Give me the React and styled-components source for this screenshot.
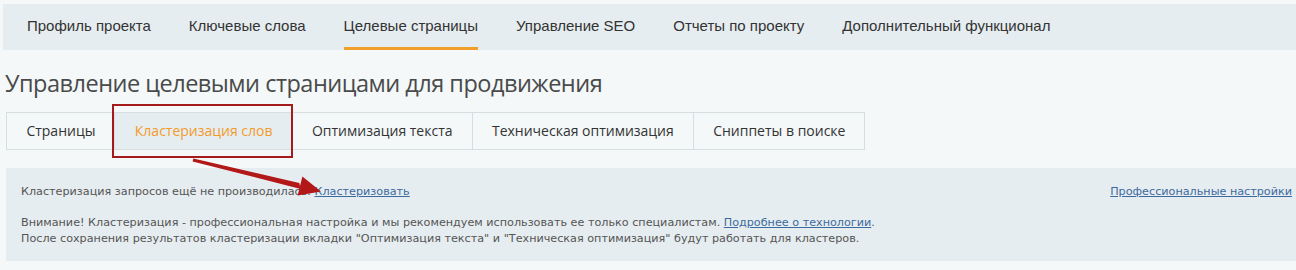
import styled, { createGlobalStyle } from "styled-components";

const GlobalStyle = createGlobalStyle`
    body {
        margin: 0;
        background: #f4f8f9;
    }
`;

const navItems = [
    "Профиль проекта",
    "Ключевые слова",
    "Целевые страницы",
    "Управление SEO",
    "Отчеты по проекту",
    "Дополнительный функционал",
];

const subTabs = [
    "Страницы",
    "Кластеризация слов",
    "Оптимизация текста",
    "Техническая оптимизация",
    "Сниппеты в поиске",
];

const App = () => {
    return (
        <Page>
            <GlobalStyle />
            <TopNav>
                {navItems.map((item) => (
                    <NavItem key={item} $active={item === "Целевые страницы"}>
                        {item}
                    </NavItem>
                ))}
            </TopNav>

            <Heading>Управление целевыми страницами для продвижения</Heading>

            <Tabs>
                {subTabs.map((tab) => (
                    <Tab key={tab} $active={tab === "Кластеризация слов"}>
                        {tab}
                    </Tab>
                ))}
            </Tabs>

            <InfoPanel>
                <StatusRow>
                    <span>
                        Кластеризация запросов ещё не производилась. <Link href="#">Кластеризовать</Link>
                    </span>
                    <Link href="#">Профессиональные настройки</Link>
                </StatusRow>
                <Note>
                    Внимание! Кластеризация - профессиональная настройка и мы рекомендуем использовать ее только специалистам.{" "}
                    <Link href="#">Подробнее о технологии</Link>.
                    <br />
                    После сохранения результатов кластеризации вкладки "Оптимизация текста" и "Техническая оптимизация" будут работать для кластеров.
                </Note>
            </InfoPanel>

            <Annotation width="1296" height="270" viewBox="0 0 1296 270">
                <rect x="113" y="105" width="179" height="52" fill="none" stroke="#a51b1b" strokeWidth="2" />
                <polygon points="193.4,158.6 192.6,161.4 300.7,188.9 299.3,183.1" fill="#b21818" />
                <polygon points="297.6,195.5 302.4,176.5 321,191.5" fill="#b21818" />
            </Annotation>
        </Page>
    );
};

export default App;

const Page = styled.div`
    position: relative;
    padding-top: 4px;
    height: 266px;
    overflow: hidden;
`;

const TopNav = styled.nav`
    display: flex;
    gap: 38px;
    margin-left: 3px;
    padding-left: 24px;
    height: 46px;
    background: #e6edf0;
`;

const NavItem = styled.div`
    box-sizing: border-box;
    height: 46px;
    padding-top: 1px;
    line-height: 42px;
    border-bottom: 3px solid ${(p) => (p.$active ? "#f0a02a" : "transparent")};
    font-family: "Liberation Sans", Arial, sans-serif;
    font-size: 15px;
    color: #333;
    white-space: nowrap;
    cursor: pointer;
`;

const Heading = styled.h1`
    margin: 18px 0 0 5px;
    font-family: "Open Sans", sans-serif;
    font-weight: 400;
    font-size: 23.5px;
    letter-spacing: -0.5px;
    line-height: 30px;
    color: #4a4a4a;
`;

const Tabs = styled.div`
    display: inline-flex;
    margin: 14px 0 0 6px;
    border: 1px solid #d6dee1;
`;

const Tab = styled.div`
    padding: 0 19px 0 19.4px;
    line-height: 36px;
    border-left: 1px solid #d6dee1;
    background: ${(p) => (p.$active ? "#e6edf0" : "transparent")};
    font-family: "Open Sans", sans-serif;
    font-size: 14px;
    color: ${(p) => (p.$active ? "#f39a2c" : "#333")};
    white-space: nowrap;
    cursor: pointer;

    &:first-child {
        border-left: none;
    }
`;

const InfoPanel = styled.div`
    margin: 18px 0 0 6px;
    padding: 16px 4px 14px 15px;
    background: #e6edf0;
    font-family: "DejaVu Sans", Tahoma, sans-serif;
    font-size: 11.2px;
    line-height: 16px;
    color: #555;
`;

const StatusRow = styled.div`
    display: flex;
    justify-content: space-between;
`;

const Note = styled.p`
    margin: 15px 0 0;
`;

const Link = styled.a`
    color: #3d6a9e;
    text-decoration: underline;
`;

const Annotation = styled.svg`
    position: absolute;
    top: 0;
    left: 0;
    pointer-events: none;
`;
